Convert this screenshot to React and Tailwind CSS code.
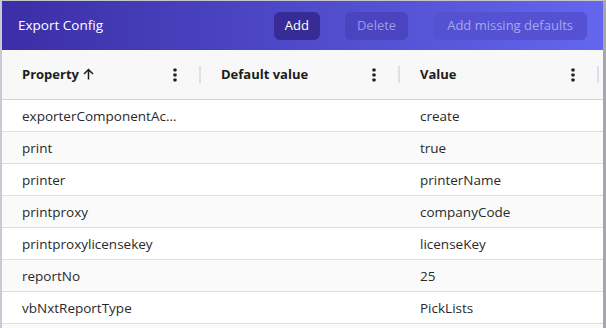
const rows = [
  ["exporterComponentAc…", "", "create"],
  ["print", "", "true"],
  ["printer", "", "printerName"],
  ["printproxy", "", "companyCode"],
  ["printproxylicensekey", "", "licenseKey"],
  ["reportNo", "", "25"],
  ["vbNxtReportType", "", "PickLists"],
  ["", "", ""],
];

const Dots = () => (
  <svg width="4" height="14" viewBox="0 0 4 14" className="text-[#1f1f1f]">
    <rect x="0.4" y="0.5" width="3.2" height="3" rx="0.8" fill="currentColor" />
    <rect x="0.4" y="5.5" width="3.2" height="3" rx="0.8" fill="currentColor" />
    <rect x="0.4" y="10.5" width="3.2" height="3" rx="0.8" fill="currentColor" />
  </svg>
);

const ArrowUp = () => (
  <svg width="11" height="12" viewBox="0 0 11 12" className="ml-[4px] inline-block align-[-1px]">
    <path d="M5.5 11.5V1.5M1 6l4.5-4.5L10 6" fill="none" stroke="#1c1c1c" strokeWidth="1.5" />
  </svg>
);

const HeadCell = ({ label, arrow }) => (
  <div className="flex h-full w-[199px] items-center pl-[20px]">
    <span className="flex-1 text-[13px] font-bold text-[#1c1c1c]">
      {label}
      {arrow && <ArrowUp />}
    </span>
    <div className="mr-[22px]">
      <Dots />
    </div>
    <div className="h-[17px] w-[2px] bg-[#dde0e8]" />
  </div>
);

export default function App() {
  return (
    <div
      className="h-[328px] w-[606px] overflow-hidden border-t border-l-2 border-r-[3px] border-t-[#c4c6cc] border-l-[#c9cad6] border-r-[#a4a7ab] bg-white"
      style={{ fontFamily: '"Open Sans", "Noto Sans", sans-serif' }}
    >
      <div className="flex h-[49px] items-center bg-gradient-to-r from-[#3b2ea6] to-[#6466ee] pl-[16px] pr-[16px]">
        <span className="flex-1 text-[13.5px] text-white">Export Config</span>
        <div className="flex items-center gap-[25px]">
          <button className="h-[28px] rounded-md bg-[#372c96] px-[11px] text-[13px] font-medium text-white">
            Add
          </button>
          <button className="h-[28px] rounded-md bg-[#4a44c0] px-[12px] text-[13px] text-[#9a9ae6]">
            Delete
          </button>
          <button className="h-[28px] rounded-md bg-[#5452d2] px-[14px] text-[13px] text-[#a5a6ec]">
            Add missing defaults
          </button>
        </div>
      </div>
      <div className="flex h-[50px] items-center border-b border-[#d4d4dc] bg-[#f8f8f8]">
        <HeadCell label="Property" arrow />
        <HeadCell label="Default value" />
        <HeadCell label="Value" />
      </div>
      {rows.map((r, i) => (
        <div
          key={i}
          className={`flex h-[32px] items-center border-b border-[#dedee8] pt-[1px] text-[13.5px] text-[#2a2a2a] ${
            i % 2 === 1 ? "bg-[#fafafa]" : "bg-white"
          }`}
        >
          <div className="w-[199px] truncate pl-[20px]">{r[0]}</div>
          <div className="w-[199px] pl-[20px]">{r[1]}</div>
          <div className="w-[199px] pl-[20px]">{r[2]}</div>
        </div>
      ))}
    </div>
  );
}
